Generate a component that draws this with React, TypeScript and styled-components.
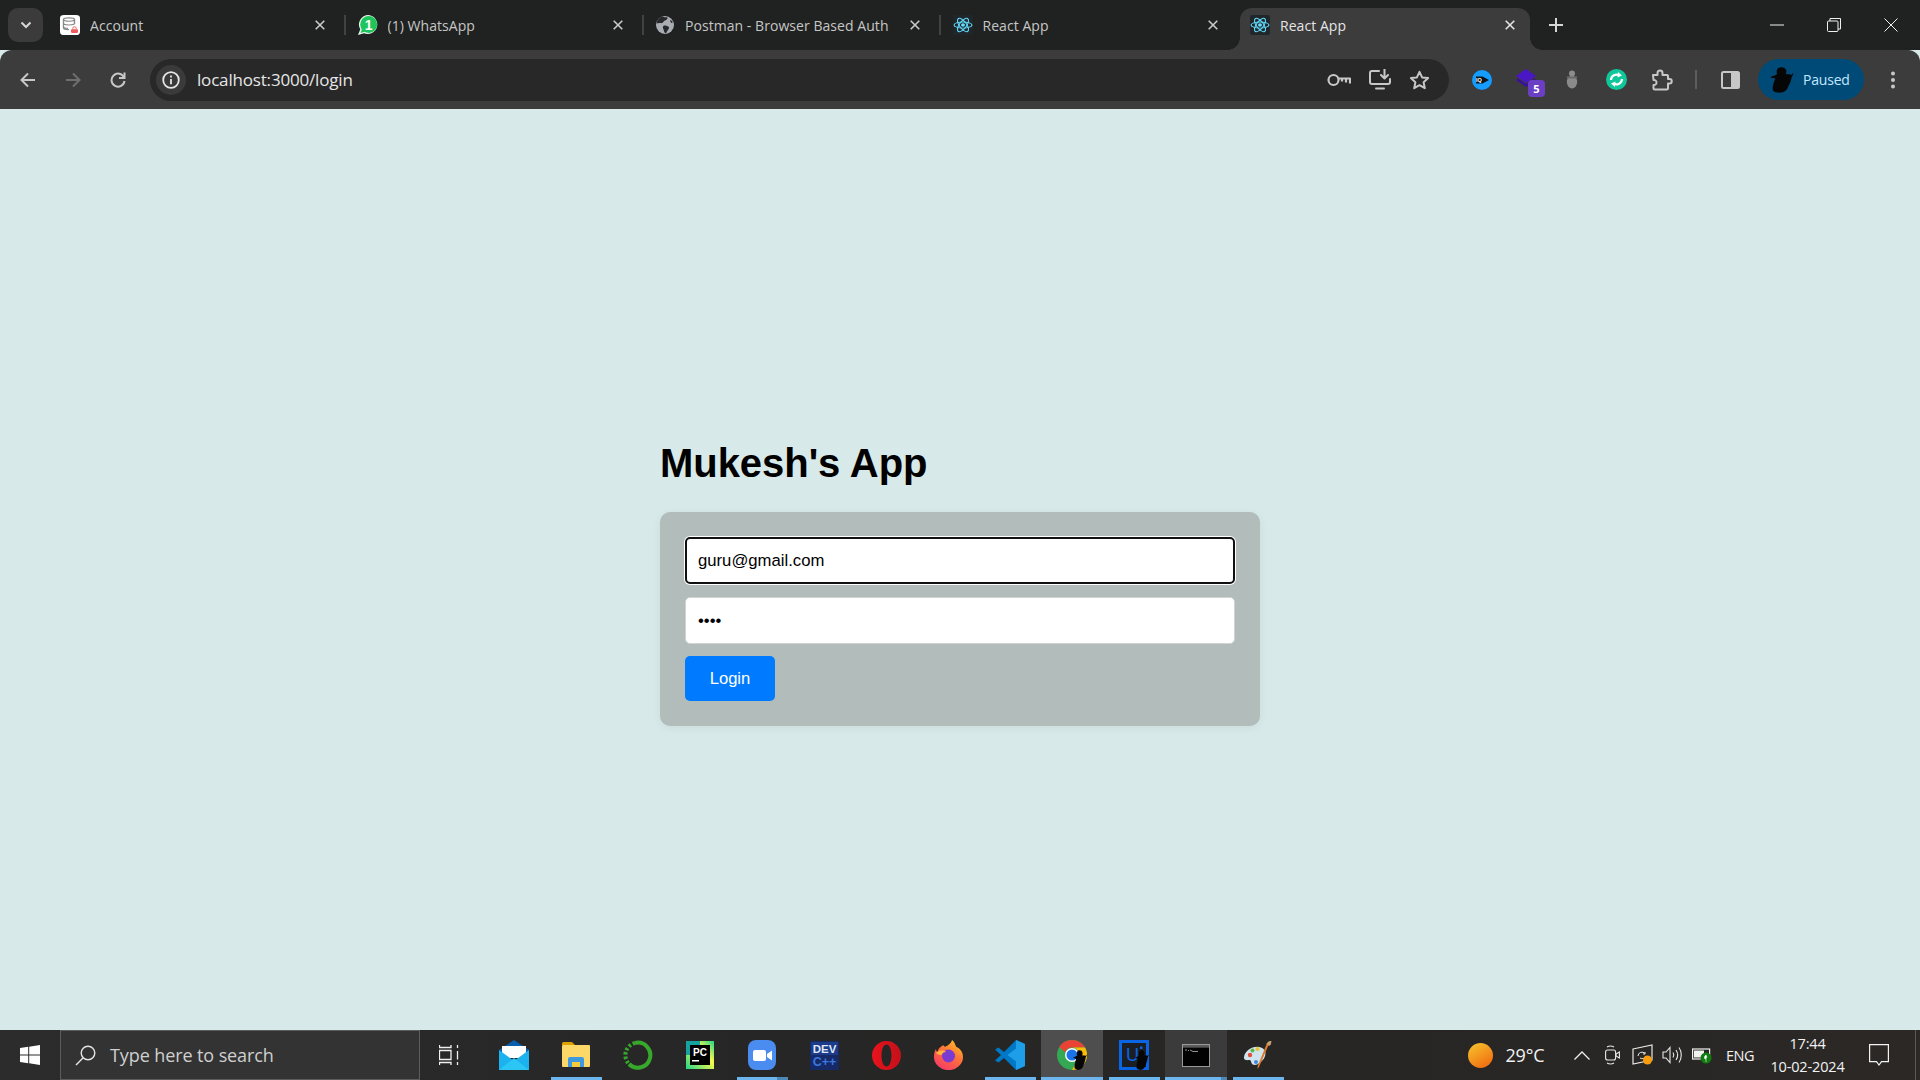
import React from "react";
import styled, { createGlobalStyle } from "styled-components";

const Global = createGlobalStyle`
  html, body { margin: 0; padding: 0; height: 100%; overflow: hidden; }
  #root { height: 100%; }
`;

const Screen = styled.div`
  width: 1920px;
  height: 1080px;
  display: flex;
  flex-direction: column;
  background: #d8e9e9;
  font-family: "Liberation Sans", Arial, sans-serif;
`;

/* ---------- Browser chrome ---------- */
const TabStrip = styled.div`
  height: 50px;
  flex: none;
  display: flex;
  align-items: flex-end;
  background: #202221;
  font-family: "Open Sans", "Noto Sans", sans-serif;
`;
const TabSearch = styled.button`
  width: 35px;
  height: 34px;
  margin: 0 7px 8px 8px;
  padding: 0;
  border: 0;
  border-radius: 10px;
  background: #3b3b3b;
  display: flex;
  align-items: center;
  justify-content: center;
  flex: none;
`;
const Tab = styled.div`
  width: 297.5px;
  height: 42px;
  flex: none;
  display: flex;
  align-items: flex-start;
`;
const TabBody = styled.div<{ $active?: boolean }>`
  width: 290px;
  height: 42px;
  flex: none;
  position: relative;
  display: flex;
  align-items: center;
  box-sizing: border-box;
  padding: 0 0 8px 10px;
  border-radius: 12px 12px 0 0;
  background: ${(p) => (p.$active ? "#3c3c3c" : "transparent")};
  color: ${(p) => (p.$active ? "#e4e4e4" : "#c6c6c6")};
  ${(p) =>
    p.$active
      ? `
    &::before, &::after {
      content: "";
      position: absolute;
      bottom: 0;
      width: 12px;
      height: 12px;
    }
    &::before {
      left: -12px;
      background: radial-gradient(circle at 0 0, transparent 11.5px, #3c3c3c 12px);
    }
    &::after {
      right: -12px;
      background: radial-gradient(circle at 100% 0, transparent 11.5px, #3c3c3c 12px);
    }
  `
      : ""}
`;
const Favicon = styled.span`
  width: 20px;
  height: 20px;
  flex: none;
  display: block;
  margin-right: 10px;
  svg { display: block; }
`;
const TabLabel = styled.span`
  flex: 1;
  font-size: 14px;
  letter-spacing: 0.05px;
  white-space: nowrap;
  overflow: hidden;
`;
const TabClose = styled.span`
  width: 10px;
  height: 10px;
  flex: none;
  margin-right: 15px;
  margin-left: 5px;
  svg { display: block; }
`;
const TabDivider = styled.span`
  width: 2px;
  height: 20px;
  margin: 7px 0 0 4px;
  flex: none;
  background: #414342;
`;
const NewTab = styled.div`
  width: 36px;
  height: 34px;
  margin-left: 0;
  margin-bottom: 8px;
  flex: none;
  display: flex;
  align-items: center;
  justify-content: center;
`;
const WindowControls = styled.div`
  margin-left: auto;
  height: 50px;
  display: flex;
  align-self: flex-start;
  align-items: center;
`;
const WindowButton = styled.div`
  width: 56.5px;
  height: 50px;
  display: flex;
  align-items: center;
  justify-content: center;
  &:last-child { width: 58px; }
`;

const Toolbar = styled.div`
  height: 59px;
  flex: none;
  display: flex;
  align-items: center;
  box-sizing: border-box;
  padding: 0 4.5px 0 5px;
  background: #3c3c3c;
  border-radius: 12px 12px 0 0;
`;
const ToolButton = styled.div`
  width: 45px;
  height: 40px;
  flex: none;
  display: flex;
  align-items: center;
  justify-content: center;
  position: relative;
`;
const AddressBar = styled.div`
  flex: 1;
  height: 42px;
  margin: 0 10.5px 0 10px;
  border-radius: 21px;
  background: #282828;
  display: flex;
  align-items: center;
  padding: 0 19px 0 6px;
`;
const InfoChip = styled.div`
  width: 30px;
  height: 30px;
  border-radius: 50%;
  background: #3a3a3a;
  display: flex;
  align-items: center;
  justify-content: center;
  flex: none;
`;
const Url = styled.span`
  margin-left: 11px;
  flex: 1;
  color: #e6e6e6;
  font-family: "Open Sans", "Noto Sans", sans-serif;
  font-size: 17px;
  letter-spacing: -0.18px;
`;
const AddressActions = styled.div`
  display: flex;
  align-items: center;
  gap: 18px;
`;
const ToolDivider = styled.span`
  width: 2px;
  height: 19px;
  margin: 0 10.5px 0 11px;
  background: #5c5c5c;
  flex: none;
`;
const Profile = styled.div`
  width: 106px;
  height: 41px;
  margin: 0 6.5px 0 5.5px;
  border-radius: 21px;
  background: #004a77;
  flex: none;
  display: flex;
  align-items: center;
  box-sizing: border-box;
  padding-left: 12px;
`;
const ProfileName = styled.span`
  margin-left: 9px;
  color: #c2e7ff;
  font-family: "Open Sans", "Noto Sans", sans-serif;
  font-size: 14px;
  letter-spacing: -0.2px;
`;

/* ---------- Page ---------- */
const Main = styled.main`
  flex: 1;
  display: flex;
  flex-direction: column;
  align-items: center;
  justify-content: center;
  background: #d8e9e9;
`;
const LoginColumn = styled.div`
  width: 600px;
`;
const Title = styled.h1`
  margin: 27.8px 0 25.8px;
  font-size: 40px;
  font-weight: 700;
  letter-spacing: -0.05px;
  color: #000;
`;
const Card = styled.form`
  box-sizing: border-box;
  height: 214px;
  padding: 25px;
  border-radius: 10px;
  background: #b2bcba;
  box-shadow: 0 2px 8px rgba(0, 0, 0, 0.06);
  display: flex;
  flex-direction: column;
  align-items: flex-start;
  gap: 13px;
`;
const Field = styled.input<{ $focused?: boolean }>`
  width: 550px;
  height: 47px;
  flex: none;
  box-sizing: border-box;
  padding: 2px 12px 0;
  border: 1px solid #cfd4d3;
  border-radius: 5px;
  background: #fff;
  color: #000;
  font-family: "Liberation Sans", Arial, sans-serif;
  font-size: 16.7px;
  outline: none;
  ${(p) =>
    p.$focused
      ? "border: 2px solid #101010; padding: 2px 11px 0; box-shadow: 0 0 0 1px #fff;"
      : ""}
`;
const LoginButton = styled.button`
  width: 90px;
  height: 45px;
  margin-top: -1px;
  padding: 1px 0 0;
  flex: none;
  border: 0;
  border-radius: 5px;
  background: #007bff;
  color: #fff;
  font-family: "Liberation Sans", Arial, sans-serif;
  font-size: 16.6px;
`;

/* ---------- Taskbar ---------- */
const Taskbar = styled.footer`
  height: 50px;
  flex: none;
  display: flex;
  align-items: stretch;
  background: linear-gradient(90deg, #2c2c2c 0%, #262626 40%, #272624 70%, #2b2826 100%);
  font-family: "Open Sans", "Noto Sans", sans-serif;
`;
const StartButton = styled.div`
  width: 60px;
  flex: none;
  display: flex;
  align-items: center;
  justify-content: center;
`;
const SearchBox = styled.div`
  width: 360px;
  flex: none;
  box-sizing: border-box;
  border: 1px solid #5c5c5c;
  background: #333333;
  display: flex;
  align-items: center;
  padding-left: 14px;
`;
const SearchText = styled.span`
  margin-left: 14px;
  color: #cfcfcf;
  font-size: 18px;
  letter-spacing: -0.1px;
`;
const TaskView = styled.div`
  width: 63px;
  flex: none;
  display: flex;
  align-items: center;
  justify-content: center;
  padding-right: 6px;
  box-sizing: border-box;
`;
const AppSlot = styled.div<{ $state?: "running" | "stacked" | "active" | "open" }>`
  width: 62px;
  flex: none;
  position: relative;
  display: flex;
  align-items: center;
  justify-content: center;
  background: ${(p) =>
    p.$state === "active" ? "#4e4e4e" : p.$state === "open" ? "#3b3b3b" : "transparent"};
  &::after {
    content: "";
    display: ${(p) => (p.$state ? "block" : "none")};
    position: absolute;
    bottom: 0;
    height: 3px;
    left: ${(p) => (p.$state === "active" || p.$state === "open" ? "0" : "6px")};
    right: ${(p) => (p.$state === "active" ? "0" : p.$state === "open" ? "0" : "5px")};
    background: ${(p) =>
      p.$state === "stacked"
        ? "linear-gradient(90deg, #6cb6f0 78%, #4d87b5 78%)"
        : p.$state === "open"
        ? "linear-gradient(90deg, #6cb6f0 90%, #4d87b5 90%)"
        : "#6cb6f0"};
  }
`;
const Tray = styled.div`
  margin-left: auto;
  display: flex;
  align-items: center;
  color: #f2f2f2;
`;
const Weather = styled.span`
  width: 25px;
  height: 25px;
  flex: none;
  svg { display: block; }
`;
const Temperature = styled.span`
  width: 74px;
  box-sizing: border-box;
  padding-left: 12.5px;
  flex: none;
  font-size: 18px;
  letter-spacing: -0.2px;
`;
const TrayIcon = styled.span`
  width: 30px;
  flex: none;
  display: flex;
  justify-content: center;
`;
const Lang = styled.span`
  width: 28px;
  margin-left: 9px;
  flex: none;
  font-size: 14.5px;
  letter-spacing: -0.5px;
  white-space: nowrap;
`;
const Clock = styled.div`
  width: 88px;
  margin-left: 9.5px;
  flex: none;
  display: flex;
  flex-direction: column;
  align-items: center;
  gap: 4px;
  font-size: 14.5px;
  line-height: 19px;
  letter-spacing: -0.15px;
`;
const Notification = styled.span`
  width: 40px;
  margin-left: 7.5px;
  flex: none;
  display: flex;
  justify-content: center;
`;
const ShowDesktop = styled.span`
  width: 4px;
  height: 50px;
  margin-left: 16px;
  flex: none;
  border-left: 1px solid #5a5a5a;
`;

/* ---------- Icons ---------- */
const Stroke = { fill: "none", stroke: "#c7c7c7", strokeLinecap: "round", strokeLinejoin: "round" } as const;

const XIcon = ({ c = "#c9c9c9" }: { c?: string }) => (
  <svg width="10" height="10" viewBox="0 0 10 10">
    <path d="M0.7 0.7 9.3 9.3M9.3 0.7 0.7 9.3" stroke={c} strokeWidth="1.6" />
  </svg>
);
const AccountIcon = () => (
  <svg width="20" height="20" viewBox="0 0 20 24" preserveAspectRatio="none">
    <rect x="0" y="0" width="20" height="24" rx="4" fill="#fff" />
    <g fill="none" stroke="#8a8a8a" strokeWidth="1.4">
      <ellipse cx="9" cy="5.5" rx="5.5" ry="2" />
      <path d="M3.500 5.500v10c0 1.200 2.500 2 5.500 2M14.500 5.500v5M3.500 10c0 1.200 2.500 2 5.500 2s5.500-.8 5.500-2M3.500 14c0 1 2 1.800 4.500 2" />
    </g>
    <rect x="11" y="17" width="7" height="4.500" rx="1" fill="#ef5b5b" />
    <path d="M12.800 17v-1.200a1.700 1.700 0 0 1 3.400 0V17" fill="none" stroke="#ef5b5b" strokeWidth="1" />
  </svg>
);
const WhatsAppIcon = () => (
  <svg width="20" height="20" viewBox="0 0 20 20">
    <path d="M10.500 0a9.500 9.500 0 0 0-8.200 14.300L0 20l6-1.800A9.500 9.500 0 1 0 10.500 0z" fill="#eaf7ee" />
    <circle cx="10.700" cy="9.500" r="8.500" fill="#1fc45a" />
    <path d="M2.500 18l1.500-4 3.500 2.500z" fill="#1fc45a" />
    <text x="10.700" y="14.700" textAnchor="middle" fontFamily="Liberation Sans" fontWeight="700" fontSize="14" fill="#fff">1</text>
  </svg>
);
const GlobeIcon = () => (
  <svg width="20" height="20" viewBox="0 0 20 20">
    <circle cx="10" cy="10" r="9" fill="#a9adb1" />
    <path d="M7 1.600c1.500 1 4 .5 5.500 1 .5 1-1 2.500-2.500 3-1.500.5-1.500 2-3 2.500-1 .3-3-.8-5.500.5C2 5.500 4 3 7 1.600zM9 10.500c2 0 4.500.5 5 2 .3 1.500-1.500 2.500-2 4-.2 1-1 2-2 1.500-1-1-1-2.500-1.500-3.500-.8-1.500-1-3.500.5-4z" fill="#26282a" />
    <path d="M15 5c1 .2 2.500 1 2.800 2.500L16 8z" fill="#26282a" />
  </svg>
);
const ReactIcon = () => (
  <svg width="20" height="20" viewBox="0 0 20 24" preserveAspectRatio="none">
    <rect width="20" height="24" rx="2" fill="#20272b" />
    <g fill="none" stroke="#61dafb" strokeWidth="1.1">
      <ellipse cx="10" cy="12" rx="9" ry="3.700" />
      <ellipse cx="10" cy="12" rx="9" ry="3.700" transform="rotate(60 10 12)" />
      <ellipse cx="10" cy="12" rx="9" ry="3.700" transform="rotate(120 10 12)" />
    </g>
    <circle cx="10" cy="12" r="2" fill="#61dafb" />
  </svg>
);
const Silhouette = ({ w = 20, h = 28 }: { w?: number; h?: number }) => (
  <svg width={w} height={h} viewBox="0 0 20 28" preserveAspectRatio="none">
    <path d="M7 1c3-1.500 6 0 6.500 2.500.5 1.500 0 3-.5 4 2 .5 4 0 5 1l1-2 .5 1-1.500 3.500c-.2 3-1.500 7-3 10.500-.5 2.500-2.500 5.500-5.500 6-3 .5-6-.5-7-2C1.500 22 3 17 4.500 12.500 3 12 1.500 11.500 0 11l3-1.500c1.500-.5 2.500-1 3-2-1-2-.5-5 1-6.500z" fill="#060606" />
  </svg>
);

const KeyIcon = () => (
  <svg width="24" height="14" viewBox="0 0 24 14" {...Stroke} strokeWidth="2.200">
    <circle cx="6.500" cy="7" r="5" />
    <path d="M11.500 5.500h11.500v5M19 5.500v4M15 5.500v3" strokeLinecap="butt" />
  </svg>
);
const InstallIcon = () => (
  <svg width="22" height="21" viewBox="0 0 22 21" {...Stroke} strokeWidth="2">
    <path d="M10 2H3a2 2 0 0 0-2 2v9a2 2 0 0 0 2 2h16a2 2 0 0 0 2-2v-3" />
    <path d="M7 19.500h8" />
    <path d="M15.500 0v9M12 6l3.500 3.500L19 6" />
  </svg>
);
const StarIcon = () => (
  <svg width="21" height="20" viewBox="0 0 21 20" {...Stroke} strokeWidth="2">
    <path d="M10.500 1.800l2.600 5.600 6 .7-4.500 4.100 1.200 6-5.300-3-5.300 3 1.200-6L1.900 8.100l6-.7z" />
  </svg>
);
const PuzzleIcon = () => (
  <svg width="22" height="22" viewBox="0 0 22 22" {...Stroke} strokeWidth="2">
    <path d="M2 6h4.500V4a2.500 2.500 0 0 1 5 0v2H16a1 1 0 0 1 1 1v3h1.500a2 2 0 0 1 0 4.500H17V19a1.500 1.500 0 0 1-1.500 1.500H4A1.500 1.500 0 0 1 2.500 19v-3c2 .2 3-1 3-2.500S4.500 10.800 2.500 11z" />
  </svg>
);
const SidePanelIcon = () => (
  <svg width="19" height="18" viewBox="0 0 19 18">
    <rect x="1" y="1" width="17" height="16" rx="1.500" fill="none" stroke="#c7c7c7" strokeWidth="2" />
    <rect x="10" y="1" width="8" height="16" fill="#c7c7c7" />
  </svg>
);
const Kebab = () => (
  <svg width="6" height="18" viewBox="0 0 6 18" fill="#c7c7c7">
    <circle cx="3" cy="2.500" r="2" />
    <circle cx="3" cy="9" r="2" />
    <circle cx="3" cy="15.500" r="2" />
  </svg>
);
const ScreencastIcon = () => (
  <svg width="20" height="20" viewBox="0 0 20 20">
    <circle cx="10" cy="10" r="10" fill="#149cff" />
    <path d="M4 6.500h6.500L17 10l-6.500 3.500H4z" fill="#0c1216" />
    <text x="7" y="12" textAnchor="middle" fontFamily="Liberation Sans" fontSize="5.500" fontWeight="700" fill="#fff">IQ</text>
  </svg>
);
const StackIcon = () => (
  <svg width="24" height="22" viewBox="0 0 24 22">
    <path d="M11 0l10 7-10 7L1 7z" fill="#4a17c4" />
    <path d="M3 9.500l8 5.500 8-5.500 2 1.500-10 7-10-7z" fill="#3a119c" />
  </svg>
);
const ExtBadge = styled.span`
  position: absolute;
  left: 24px;
  top: 20px;
  width: 17px;
  height: 17px;
  border-radius: 4px;
  background: #6b3fc4;
  color: #fff;
  font-size: 11px;
  font-weight: 700;
  display: flex;
  align-items: center;
  justify-content: center;
  font-family: "Open Sans", sans-serif;
`;
const BugIcon = () => (
  <svg width="12" height="19" viewBox="0 0 12 19">
    <circle cx="6" cy="3.500" r="3" fill="#8c8c8c" />
    <ellipse cx="6" cy="12" rx="5.200" ry="6.500" fill="#8a8a8a" />
    <rect x="0.800" y="6.500" width="10.400" height="2" fill="#6a6a6a" />
  </svg>
);
const SyncGreenIcon = () => (
  <svg width="21" height="21" viewBox="0 0 21 21">
    <circle cx="10.500" cy="10.500" r="10.500" fill="#10c79b" />
    <path d="M5 11a5.500 5.500 0 0 1 8.500-4.500M16 10a5.500 5.500 0 0 1-8.500 4.500" fill="none" stroke="#fff" strokeWidth="2.200" />
    <path d="M12 3l4 3.500-4.500 2zM9 18l-4-3.500 4.500-2z" fill="#fff" />
  </svg>
);

const WinLogo = () => (
  <svg width="20" height="20" viewBox="0 0 20 20" fill="#fff">
    <path d="M0 3l8.200-1.200v7.700H0zM9.200 1.700L20 0v9.500H9.200zM0 10.500h8.200v7.700L0 17zM9.200 10.500H20V20L9.200 18.300z" />
  </svg>
);
const SearchGlyph = () => (
  <svg width="21" height="21" viewBox="0 0 21 21" fill="none" stroke="#e6e6e6" strokeWidth="1.400">
    <circle cx="13" cy="8" r="6.800" />
    <path d="M8.200 12.800 1 20" />
  </svg>
);
const TaskViewGlyph = () => (
  <svg width="20" height="20" viewBox="0 0 20 20" fill="none" stroke="#f0f0f0" strokeWidth="1.300">
    <path d="M0.500 0v2.500h11.500V0M0.500 5.500h11.500v9H0.500zM0.500 20v-2.500h11.500V20M18.500 0v3M18.500 6v8.500M18.500 17v3" />
  </svg>
);
const MailIcon = () => (
  <svg width="30" height="30" viewBox="0 0 30 30">
    <path d="M15 0 30 10v4H0v-4z" fill="#0a5eae" />
    <path d="M3 6h24v12H3z" fill="#fff" />
    <path d="M0 10l15 11L30 10v20H0z" fill="#1bb2ef" />
    <path d="M0 30 15 18l15 12z" fill="#2cc6f5" />
  </svg>
);
const FolderIcon = () => (
  <svg width="28" height="26" viewBox="0 0 28 26">
    <path d="M0 1.500A1.500 1.500 0 0 1 1.500 0H10l3 3H0z" fill="#dfa100" />
    <rect y="3" width="28" height="22" rx="1" fill="#fcd868" />
    <path d="M6 25v-8a2 2 0 0 1 2-2h12a2 2 0 0 1 2 2v8h-4v-5h-8v5z" fill="#3f99dd" />
    <rect x="10" y="20" width="8" height="5" fill="#f8c93a" />
  </svg>
);
const RingIcon = () => (
  <svg width="30" height="30" viewBox="0 0 30 30" fill="none">
    <path d="M12 3a12.500 12.500 0 1 1-6 21" stroke="#38a82c" strokeWidth="4" />
    <path d="M12 3a12.500 12.500 0 0 0-6 21" stroke="#38a82c" strokeWidth="4" strokeDasharray="2.500 2" />
  </svg>
);
const PyCharmIcon = () => (
  <svg width="28" height="28" viewBox="0 0 28 28">
    <defs>
      <linearGradient id="pc" x1="0" y1="1" x2="1" y2="0">
        <stop offset="0" stopColor="#21d789" />
        <stop offset="0.6" stopColor="#fcf84a" />
        <stop offset="1" stopColor="#21d789" />
      </linearGradient>
    </defs>
    <rect width="28" height="28" fill="url(#pc)" />
    <rect x="0" y="0" width="14" height="14" fill="#16a3a0" />
    <rect x="4" y="4" width="20" height="20" fill="#000" />
    <text x="14" y="15" textAnchor="middle" fontFamily="Liberation Sans" fontWeight="700" fontSize="10" fill="#fff">PC</text>
    <rect x="6" y="19" width="7" height="1.500" fill="#fff" />
  </svg>
);
const ZoomIcon = () => (
  <svg width="28" height="30" viewBox="0 0 28 30">
    <rect width="28" height="30" rx="8" fill="#4a8cf0" />
    <rect x="5" y="10" width="13" height="11" rx="2" fill="#fff" />
    <path d="M19 14l5-3.500v10L19 17z" fill="#fff" />
  </svg>
);
const DevIcon = () => (
  <svg width="29" height="29" viewBox="0 0 29 29">
    <rect width="29" height="29" rx="1" fill="#152a66" />
    <rect x="1" y="1" width="27" height="13" fill="#1c3c8a" />
    <text x="14.500" y="12" textAnchor="middle" fontFamily="Liberation Sans" fontWeight="700" fontSize="11.500" fill="#dfe6f5">DEV</text>
    <text x="14.500" y="25" textAnchor="middle" fontFamily="Liberation Sans" fontWeight="700" fontSize="12.500" fill="#3a78e0">C++</text>
  </svg>
);
const OperaIcon = () => (
  <svg width="29" height="29" viewBox="0 0 29 29">
    <defs>
      <linearGradient id="op" x1="0" y1="0" x2="1" y2="0">
        <stop offset="0" stopColor="#e8131c" />
        <stop offset="1" stopColor="#c4101a" />
      </linearGradient>
    </defs>
    <path fillRule="evenodd" d="M14.500 0a14.500 14.500 0 1 0 0 29 14.500 14.500 0 0 0 0-29zm0 3.500c3 0 5 4.800 5 11s-2 11-5 11-5-4.800-5-11 2-11 5-11z" fill="url(#op)" />
  </svg>
);
const FirefoxIcon = () => (
  <svg width="29" height="30" viewBox="0 0 29 30">
    <defs>
      <linearGradient id="ff" x1="0.800" y1="0" x2="0.200" y2="1">
        <stop offset="0" stopColor="#ffc422" />
        <stop offset="0.45" stopColor="#ff7139" />
        <stop offset="1" stopColor="#f5376b" />
      </linearGradient>
    </defs>
    <path d="M18 0c3 2 3 5 4.500 7C27 9 29 13 29 17a14.300 13 0 0 1-29 0c0-3 .5-6 2-8 0 1.500.5 2.500 1.500 3C4 9 6 7 8 6c2-1 2 0 3 1 1.500-1 6-3 7-7z" fill="url(#ff)" />
    <circle cx="14.500" cy="16" r="6.500" fill="#7a3bd0" />
    <path d="M2 13c4-4 8-3 10-1-2 0-4 1-4.500 3C5 15 3 14 2 13z" fill="#ffb53a" />
  </svg>
);
const VSCodeIcon = () => (
  <svg width="30" height="30" viewBox="0 0 30 30">
    <path d="M21 0l9 4v22l-9 4L9 18l-5.500 4.500L0 20.500 6 15 0 9.500 3.500 7.500 9 12z" fill="#0078c8" />
    <path d="M21 0l9 4v22l-9 4zM21 8.500 12.500 15 21 21.500z" fill="#1e9ee8" fillRule="evenodd" />
  </svg>
);
const SmudgeOverlay = styled.span`
  position: absolute;
  left: 32px;
  top: 20px;
  filter: blur(0.6px);
  svg { display: block; }
`;
const ChromeIcon = () => (
  <svg width="30" height="30" viewBox="0 0 30 30">
    <circle cx="15" cy="15" r="15" fill="#34a853" />
    <path d="M15 0a15 15 0 0 1 13 7.500H15a7.500 7.500 0 0 0-7 4.800L2.300 7A15 15 0 0 1 15 0z" fill="#ea4335" />
    <path d="M28 7.500A15 15 0 0 1 15 30l6.500-11.300A7.500 7.500 0 0 0 15 7.500z" fill="#fbbc04" />
    <circle cx="15" cy="15" r="7" fill="#fff" />
    <circle cx="15" cy="15" r="5.500" fill="#1a73e8" />
  </svg>
);
const UiPathIcon = () => (
  <svg width="30" height="30" viewBox="0 0 30 30">
    <rect x="1.500" y="1.500" width="27" height="27" fill="#1b1f24" stroke="#0a64e6" strokeWidth="3" />
    <text x="7" y="21" fontFamily="Liberation Sans" fontSize="18" fill="#0a64e6">U</text>
    <rect x="21" y="11" width="2.500" height="10" fill="#0a64e6" />
    <rect x="21" y="6.500" width="2.500" height="2.500" fill="#0a64e6" />
  </svg>
);
const CmdIcon = () => (
  <svg width="28" height="23" viewBox="0 0 28 23">
    <rect width="28" height="23" fill="#9a9a9a" />
    <rect x="1" y="1" width="26" height="2.500" fill="#5a5a5a" />
    <rect x="1" y="3.500" width="26" height="18.500" fill="#020202" />
    <path d="M3 6h2M6 6.500h1M8 6l3 1.500h5" stroke="#bbb" strokeWidth="0.800" fill="none" />
  </svg>
);
const PaintIcon = () => (
  <svg width="28" height="29" viewBox="0 0 28 29">
    <path d="M15 6C8 5 1 10 0 16c-.5 3 2.500 3.500 5 3 2-.3 2 1.500 2.500 3 1 2.500 5 2.500 8 0 4-3 6-6 6-10 0-3-3-5.500-6.500-6z" fill="#cfe4ef" />
    <circle cx="6" cy="14" r="2.200" fill="#e24d3c" />
    <circle cx="8.500" cy="9.500" r="2" fill="#5bb84a" />
    <circle cx="13.500" cy="8" r="2" fill="#f0c029" />
    <circle cx="12" cy="21" r="2" fill="#4187db" />
    <path d="M25 3 15 26l-1.500 2 .2-3L23 2z" fill="#d9792a" />
    <path d="M22.500 3c1-2.500 3-3 5-3-.5 2 0 4-2.500 5z" fill="#c9a26b" />
  </svg>
);

const tabs = [
  { title: "Account", icon: <AccountIcon /> },
  { title: "(1) WhatsApp", icon: <WhatsAppIcon /> },
  { title: "Postman - Browser Based Auth", icon: <GlobeIcon /> },
  { title: "React App", icon: <ReactIcon /> },
  { title: "React App", icon: <ReactIcon />, active: true },
];

type SlotState = "running" | "stacked" | "active" | "open" | undefined;
const apps: { key: string; icon: React.ReactNode; state?: SlotState; smudge?: boolean }[] = [
  { key: "mail", icon: <MailIcon /> },
  { key: "folder", icon: <FolderIcon />, state: "running" },
  { key: "ring", icon: <RingIcon /> },
  { key: "pycharm", icon: <PyCharmIcon /> },
  { key: "zoom", icon: <ZoomIcon />, state: "stacked" },
  { key: "dev", icon: <DevIcon /> },
  { key: "opera", icon: <OperaIcon /> },
  { key: "firefox", icon: <FirefoxIcon /> },
  { key: "vscode", icon: <VSCodeIcon />, state: "running" },
  { key: "chrome", icon: <ChromeIcon />, state: "active", smudge: true },
  { key: "uipath", icon: <UiPathIcon />, state: "running", smudge: true },
  { key: "cmd", icon: <CmdIcon />, state: "open" },
  { key: "paint", icon: <PaintIcon />, state: "running" },
];

export default function App() {
  return (
    <Screen>
      <Global />
      <TabStrip>
        <TabSearch>
          <svg width="12" height="8" viewBox="0 0 12 8" fill="none" stroke="#d6d6d6" strokeWidth="2">
            <path d="M1.500 1.500 6 6l4.500-4.500" />
          </svg>
        </TabSearch>
        {tabs.map((t, i) => (
          <Tab key={i}>
            <TabBody $active={t.active}>
              <Favicon>{t.icon}</Favicon>
              <TabLabel>{t.title}</TabLabel>
              <TabClose>
                <XIcon c={t.active ? "#e4e4e4" : "#c9c9c9"} />
              </TabClose>
            </TabBody>
            {i < 3 && <TabDivider />}
          </Tab>
        ))}
        <NewTab>
          <svg width="14" height="14" viewBox="0 0 14 14" stroke="#d6d6d6" strokeWidth="2">
            <path d="M7 0v14M0 7h14" />
          </svg>
        </NewTab>
        <WindowControls>
          <WindowButton>
            <svg width="14" height="2" viewBox="0 0 14 2"><path d="M0 1h14" stroke="#f0f0f0" strokeWidth="1" /></svg>
          </WindowButton>
          <WindowButton>
            <svg width="14" height="14" viewBox="0 0 14 14" fill="none" stroke="#f0f0f0" strokeWidth="1">
              <path d="M3 3V.5h10.500V11H11" />
              <rect x="0.500" y="3" width="10.500" height="10.500" rx="1" />
            </svg>
          </WindowButton>
          <WindowButton>
            <svg width="14" height="14" viewBox="0 0 14 14" stroke="#f0f0f0" strokeWidth="1"><path d="M0.500 0.500 13.500 13.500M13.500 0.500 0.500 13.500" /></svg>
          </WindowButton>
        </WindowControls>
      </TabStrip>

      <Toolbar>
        <ToolButton>
          <svg width="16" height="16" viewBox="0 0 16 16" {...Stroke} strokeWidth="2">
            <path d="M15 8H1.500M8 1.500 1.500 8 8 14.500" strokeLinecap="butt" strokeLinejoin="miter" />
          </svg>
        </ToolButton>
        <ToolButton>
          <svg width="16" height="16" viewBox="0 0 16 16" fill="none" stroke="#6f6f6f" strokeWidth="2">
            <path d="M1 8h13.500M8 1.500 14.500 8 8 14.500" />
          </svg>
        </ToolButton>
        <ToolButton>
          <svg width="16" height="16" viewBox="0 0 16 16" fill="none" stroke="#c7c7c7" strokeWidth="2">
            <path d="M14 5.500A6.500 6.500 0 1 0 14.500 9" />
            <path d="M14.500 0.500v5.500H9" />
          </svg>
        </ToolButton>
        <AddressBar>
          <InfoChip>
            <svg width="18" height="18" viewBox="0 0 18 18" fill="none" stroke="#e6e6e6" strokeWidth="1.800">
              <circle cx="9" cy="9" r="7.800" />
              <path d="M9 8v5.200M9 4.500v2" />
            </svg>
          </InfoChip>
          <Url>localhost:3000/login</Url>
          <AddressActions>
            <KeyIcon />
            <InstallIcon />
            <StarIcon />
          </AddressActions>
        </AddressBar>
        <ToolButton><ScreencastIcon /></ToolButton>
        <ToolButton>
          <StackIcon />
          <ExtBadge>5</ExtBadge>
        </ToolButton>
        <ToolButton><BugIcon /></ToolButton>
        <ToolButton><SyncGreenIcon /></ToolButton>
        <ToolButton><PuzzleIcon /></ToolButton>
        <ToolDivider />
        <ToolButton><SidePanelIcon /></ToolButton>
        <Profile>
          <Silhouette w={24} h={26} />
          <ProfileName>Paused</ProfileName>
        </Profile>
        <ToolButton><Kebab /></ToolButton>
      </Toolbar>

      <Main>
        <LoginColumn>
          <Title>Mukesh's App</Title>
          <Card onSubmit={(e) => e.preventDefault()}>
            <Field $focused type="email" value="guru@gmail.com" readOnly />
            <Field type="password" value="guru" readOnly />
            <LoginButton type="submit">Login</LoginButton>
          </Card>
        </LoginColumn>
      </Main>

      <Taskbar>
        <StartButton><WinLogo /></StartButton>
        <SearchBox>
          <SearchGlyph />
          <SearchText>Type here to search</SearchText>
        </SearchBox>
        <TaskView><TaskViewGlyph /></TaskView>
        {apps.map((a) => (
          <AppSlot key={a.key} $state={a.state}>
            {a.icon}
            {a.smudge && (
              <SmudgeOverlay><Silhouette w={14} h={20} /></SmudgeOverlay>
            )}
          </AppSlot>
        ))}
        <Tray>
          <Weather>
            <svg width="25" height="25" viewBox="0 0 25 25">
              <defs>
                <linearGradient id="sun" x1="0.200" y1="0" x2="0.800" y2="1">
                  <stop offset="0" stopColor="#f6c02c" />
                  <stop offset="1" stopColor="#f0690f" />
                </linearGradient>
              </defs>
              <circle cx="12.500" cy="12.500" r="12.500" fill="url(#sun)" />
            </svg>
          </Weather>
          <Temperature>29°C</Temperature>
          <TrayIcon>
            <svg width="16" height="9" viewBox="0 0 16 9" fill="none" stroke="#eee" strokeWidth="1.300"><path d="M0.500 8.500 8 1l7.500 7.500" /></svg>
          </TrayIcon>
          <TrayIcon>
            <svg width="15" height="20" viewBox="0 0 15 20" fill="none" stroke="#e8e8e8" strokeWidth="1.100">
              <rect x="0.600" y="5" width="10" height="10" rx="2" />
              <path d="M11 9l3.400-2v6L11 11zM2 2c2-1.200 5-1.200 7 0M2 18c2 1.200 5 1.200 7 0" />
            </svg>
          </TrayIcon>
          <TrayIcon>
            <svg width="21" height="22" viewBox="0 0 21 22">
              <path d="M1 5 20 1v15L1 20z" fill="none" stroke="#e8e8e8" strokeWidth="1.200" />
              <path d="M6 12a4 4 0 0 1 7-2.500M13 8v2h-2M14 12a4 4 0 0 1-6 2" fill="none" stroke="#e8e8e8" strokeWidth="1" />
              <circle cx="15.500" cy="16" r="4.500" fill="#f99d0e" />
            </svg>
          </TrayIcon>
          <TrayIcon>
            <svg width="20" height="18" viewBox="0 0 20 18" fill="none" stroke="#e8e8e8" strokeWidth="1.100">
              <path d="M1 6h3l4-4.500v15L4 12H1z" />
              <path d="M11 6.500c1 1.500 1 3.500 0 5M14 4c2 3 2 7 0 10M17 1.500c3 4 3 11 0 15" />
            </svg>
          </TrayIcon>
          <TrayIcon>
            <svg width="20" height="18" viewBox="0 0 20 18">
              <rect x="0.600" y="3" width="17" height="10" fill="none" stroke="#f2f2f2" strokeWidth="1.200" />
              <rect x="2" y="4.500" width="10" height="7" fill="#f2f2f2" />
              <circle cx="14" cy="12" r="5.500" fill="#107c10" />
              <path d="M14 9c-1.500 1-2 2.500-1 4 1.500-.2 2.500-1.500 1-4zM14 13v3" fill="#fff" stroke="#fff" strokeWidth="0.600" />
            </svg>
          </TrayIcon>
          <Lang>ENG</Lang>
          <Clock>
            <span>17:44</span>
            <span>10-02-2024</span>
          </Clock>
          <Notification>
            <svg width="20" height="22" viewBox="0 0 20 22" fill="none" stroke="#f2f2f2" strokeWidth="1.200">
              <path d="M0.600 0.600h18.800v17H12.500L10 21l-2.500-3.400H0.600z" />
            </svg>
          </Notification>
          <ShowDesktop />
        </Tray>
      </Taskbar>
    </Screen>
  );
}
